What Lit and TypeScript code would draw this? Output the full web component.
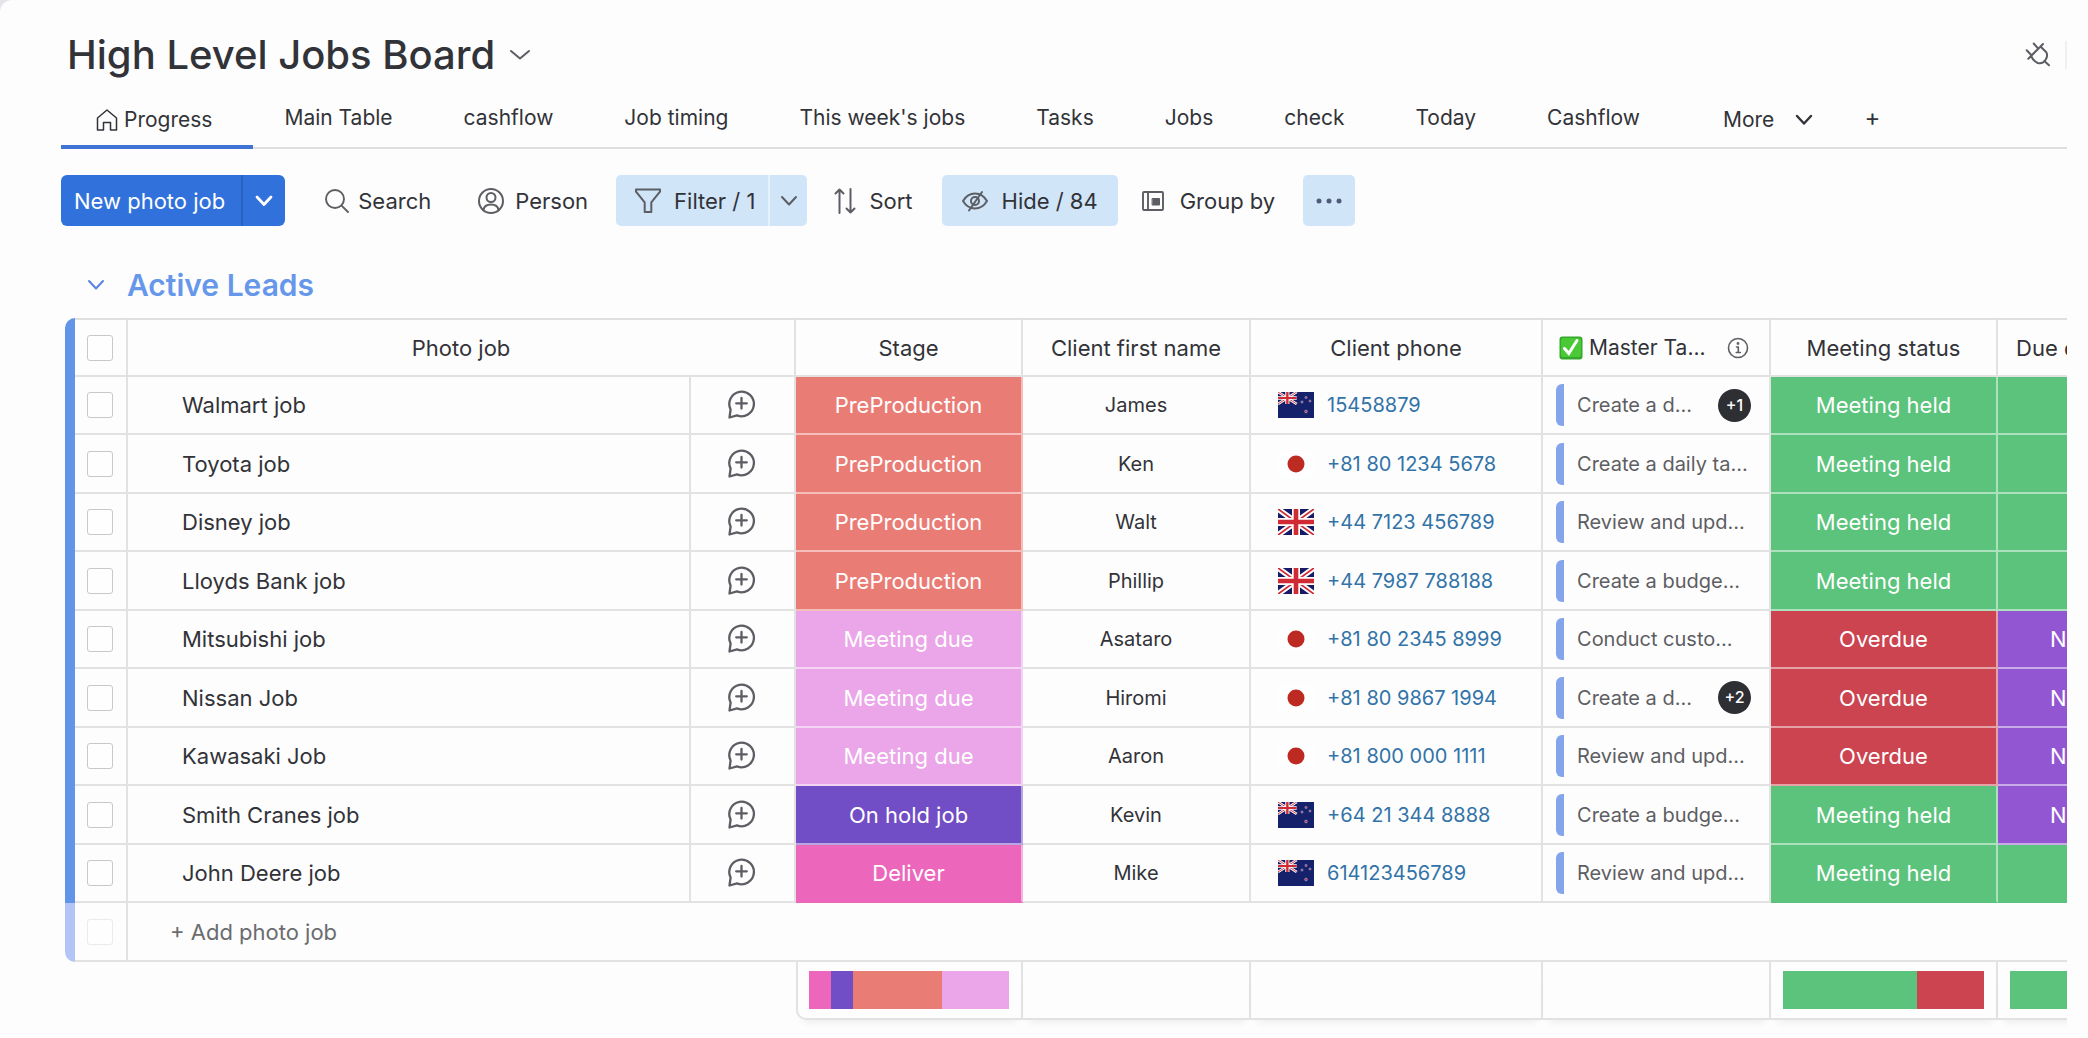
import { LitElement, html, css, svg, nothing } from "lit";
import { customElement } from "lit/decorators.js";
import { classMap } from "lit/directives/class-map.js";
import { styleMap } from "lit/directives/style-map.js";

type Flag = "nz" | "jp" | "gb";

interface Job {
  name: string;
  stage: string;
  client: string;
  flag: Flag;
  phone: string;
  task: string;
  extra?: number;
  meeting: string;
  due: string;
}

const COLORS: Record<string, string> = {
  PreProduction: "#e97d76",
  "Meeting due": "#eaa6e8",
  "On hold job": "#714dc6",
  Deliver: "#ec66bb",
  "Meeting held": "#5bc37c",
  Overdue: "#cb444f",
  N: "#9256d2",
  "": "#5bc37c",
};

const JOBS: Job[] = [
  { name: "Walmart job", stage: "PreProduction", client: "James", flag: "nz", phone: "15458879", task: "Create a d...", extra: 1, meeting: "Meeting held", due: "" },
  { name: "Toyota job", stage: "PreProduction", client: "Ken", flag: "jp", phone: "+81 80 1234 5678", task: "Create a daily ta...", meeting: "Meeting held", due: "" },
  { name: "Disney job", stage: "PreProduction", client: "Walt", flag: "gb", phone: "+44 7123 456789", task: "Review and upd...", meeting: "Meeting held", due: "" },
  { name: "Lloyds Bank job", stage: "PreProduction", client: "Phillip", flag: "gb", phone: "+44 7987 788188", task: "Create a budge...", meeting: "Meeting held", due: "" },
  { name: "Mitsubishi job", stage: "Meeting due", client: "Asataro", flag: "jp", phone: "+81 80 2345 8999", task: "Conduct custo...", meeting: "Overdue", due: "N" },
  { name: "Nissan Job", stage: "Meeting due", client: "Hiromi", flag: "jp", phone: "+81 80 9867 1994", task: "Create a d...", extra: 2, meeting: "Overdue", due: "N" },
  { name: "Kawasaki Job", stage: "Meeting due", client: "Aaron", flag: "jp", phone: "+81 800 000 1111", task: "Review and upd...", meeting: "Overdue", due: "N" },
  { name: "Smith Cranes job", stage: "On hold job", client: "Kevin", flag: "nz", phone: "+64 21 344 8888", task: "Create a budge...", meeting: "Meeting held", due: "N" },
  { name: "John Deere job", stage: "Deliver", client: "Mike", flag: "nz", phone: "614123456789", task: "Review and upd...", meeting: "Meeting held", due: "" },
];

const TABS = ["Main Table", "cashflow", "Job timing", "This week's jobs", "Tasks", "Jobs", "check", "Today", "Cashflow"];

const icon = (w: number, h: number, body: unknown, stroke = 2) => html`<svg class="icon" width=${w} height=${h}
  viewBox="0 0 ${w} ${h}" fill="none" stroke="currentColor" stroke-width=${stroke} stroke-linecap="round"
  stroke-linejoin="round" aria-hidden="true">${body}</svg>`;

const chevron = (w = 18, stroke = 2) => icon(w, 12, svg`<path d="M2 2 L${w / 2} 9.5 L${w - 2} 2"/>`, stroke);

const homeIcon = () => icon(24, 24, svg`<path d="M2.500 10 12 2l9.500 8v12h-6v-7.500h-7V22h-6z"/>`, 1.5);
const searchIcon = () => icon(26, 26, svg`<circle cx="11" cy="11" r="9"/><path d="M17.600 17.600 24 24"/>`, 1.9);
const personIcon = () => icon(28, 28, svg`<circle cx="14" cy="14" r="12"/><circle cx="14" cy="10.500" r="4.500"/><path d="M6.500 23c.6-4 3.500-5.500 7.500-5.500s6.900 1.500 7.500 5.500"/>`, 2);
const filterIcon = () => icon(28, 28, svg`<path d="M2 2.500h24v2.200l-8.700 10.600V25h-6.600v-9.700L2 4.700z"/>`, 2);
const sortIcon = () => icon(24, 28, svg`<path d="M6.500 26V2.500M2.500 6.500l4-4 4 4M17.500 2v23.500M13.500 21.500l4 4 4-4"/>`, 2);
const hideIcon = () => icon(28, 24, svg`<path d="M2 12c3-5 7-7.500 12-7.500S23 7 26 12c-3 5-7 7.500-12 7.500S5 17 2 12z"/><circle cx="14" cy="12" r="4"/><path d="M8 21.500 21 3"/>`, 2);
const groupIcon = () => icon(24, 22, svg`<rect x="2" y="2" width="20" height="18" rx="1"/><path d="M7 2v18"/><path d="M11.500 8.500h7v6.500h-7z" fill="currentColor" stroke-width="1"/>`, 1.9);
const plugIcon = () => icon(26, 26, svg`<path d="M3.300 16.700 18 2M1.700 8.300l5 5.200M8.700 1.500l4.500 5.200M6.200 14c1.500 3.600 4 6 6.500 7 3 .8 6.300-.6 8-3.400 1.500-2.500 1.800-5.200.6-7.300L15.500 4.500M19.300 19l4.700 4.300"/>`, 2);
const chatIcon = () => icon(32, 32, svg`<path d="M2.500 29.500 3.600 21.500A12.300 12.300 0 1 1 10 27.400z"/><path d="M14.500 10v10.500M9.200 15.300h10.600"/>`, 2.3);
const infoIcon = () => icon(22, 22, svg`<circle cx="11" cy="11" r="9.500"/><path d="M9.500 10h1.800v5.500M9.300 15.500h4"/><circle cx="11" cy="6.500" r=".6" fill="currentColor"/>`, 1.6);
const checkEmoji = () => html`<svg class="icon" width="24" height="24" viewBox="0 0 24 24" aria-hidden="true">
  <rect x=".5" y=".5" width="23" height="23" rx="3" fill="#35a82c"/><rect x="2" y="2" width="20" height="19" rx="2" fill="#49c936"/>
  <path d="M5.500 12.500 9.800 17.500 18 4.500" fill="none" stroke="#fff" stroke-width="3" stroke-linecap="round"/></svg>`;

const unionJack = svg`<rect width="36" height="26" fill="#161b66"/>
  <path d="M0 0 36 26M36 0 0 26" stroke="#fff" stroke-width="5.500"/>
  <path d="M0 0 36 26M36 0 0 26" stroke="#d02a35" stroke-width="1.800"/>
  <path d="M18 0v26M0 13h36" stroke="#fff" stroke-width="8"/>
  <path d="M18 0v26M0 13h36" stroke="#d02a35" stroke-width="4.600"/>`;

const FLAGS: Record<Flag, { label: string; body: unknown }> = {
  gb: { label: "United Kingdom", body: unionJack },
  jp: { label: "Japan", body: svg`<rect width="36" height="26" fill="#fefefe"/><circle cx="18" cy="13" r="8.500" fill="#bc2a22"/>` },
  nz: {
    label: "New Zealand",
    body: svg`<rect width="36" height="26" fill="#15226b"/><g transform="scale(.52 .46)">${unionJack}</g>
      <g fill="#c9344f" stroke="#9fb0dd" stroke-width=".6"><circle cx="28" cy="5.500" r="1.100"/><circle cx="24" cy="10" r="1.100"/><circle cx="32" cy="9" r="1"/><circle cx="28" cy="19.500" r="1.400"/></g>`,
  },
};

@customElement("app-root")
export class AppRoot extends LitElement {
  static styles = css`
    :host {
      display: block;
      min-height: 100vh;
      background: #e4e5e8;
      color: #323338;
      font-family: Inter, "Open Sans", sans-serif;
      font-size: 22px;
      line-height: 28px;
    }
    *, *::before, *::after { box-sizing: border-box; }
    .page {
      min-height: 100vh;
      padding: 27px 21px 16px 61px;
      background: #fdfdfd;
      border-top-left-radius: 12px;
      overflow: hidden;
    }
    button {
      display: inline-flex;
      align-items: center;
      border: 0;
      padding: 0;
      background: none;
      color: inherit;
      font: inherit;
      white-space: nowrap;
      cursor: pointer;
    }
    .icon { display: block; flex: none; color: #5c5e64; }

    .top { display: flex; justify-content: space-between; align-items: center; height: 56px; }
    .title { display: flex; align-items: center; gap: 14px; padding-left: 6px; }
    h1 { margin: 0; font-size: 40px; line-height: 56px; font-weight: 500; }
    .plug { padding-right: 14px; border-right: 2px solid #f0f0f0; height: 28px; }

    .tabs { display: flex; align-items: stretch; height: 66px; border-bottom: 2px solid #dfdfdf; font-size: 21px; }
    .tab { padding: 6px 35px 0 36px; }
    .tab.active {
      gap: 5px;
      padding: 12px 41px 0 34px;
      margin: 0 -5px -2px 0;
      border-bottom: 4px solid #3f74d6;
    }
    .tab.more { gap: 21px; padding: 10px 0 0 48px; }
    .tab.add { padding: 6px 0 0 51px; font-size: 24px; }
    .dark .icon { color: #323338; }

    .toolbar { display: flex; align-items: center; height: 51px; margin-top: 26px; }
    .split { display: flex; height: 51px; border-radius: 6px; overflow: hidden; }
    .tool { height: 51px; gap: 12px; }
    .primary { background: #3071dc; color: #fff; margin-right: 39px; }
    .primary .icon { color: #fff; }
    .primary .tool { padding: 0 16px 0 13px; }
    .primary .arrow { width: 44px; justify-content: center; border-left: 2px solid #2a61c4; }
    .soft { background: #d0e5f8; border-radius: 5px; }
    .filter .tool { padding: 0 13px 0 18px; }
    .filter .arrow { width: 39px; justify-content: center; border-left: 2px solid #e6f1fb; }
    .hide { gap: 13px; padding: 0 20px 0 19px; margin: 0 23px 0 29px; }
    .search { gap: 8px; margin-right: 46px; }
    .person { gap: 10px; margin-right: 28px; }
    .filter { margin-right: 26px; }
    .group { gap: 15px; margin-right: 28px; }
    .dots { width: 52px; justify-content: center; }
    .dots .icon { color: #4f5b78; }

    .section { display: flex; align-items: center; gap: 22px; margin-top: 36px; padding-left: 26px; height: 46px; }
    .section .icon { color: #5b83e0; }
    h2 { margin: 0; font-size: 30px; line-height: 46px; font-weight: 600; color: #6797eb; }

    .board { overflow: hidden; padding: 10px 0 20px 4px; }
    table { table-layout: fixed; width: 2159px; border-collapse: separate; border-spacing: 0; }
    .c-strip { width: 10px; }
    .c-check { width: 53px; }
    .c-name { width: 563px; }
    .c-chat { width: 105px; }
    .c-col { width: 227px; }
    .c-mid { width: 228px; }
    .c-phone { width: 292px; }
    th, td {
      height: 58px;
      padding: 0;
      font-weight: 400;
      text-align: center;
      white-space: nowrap;
      border-right: 2px solid #e2e2e2;
      border-bottom: 2px solid #e2e2e2;
    }
    thead th { border-top: 2px solid #dfdfdf; height: 59px; }
    tbody tr:nth-child(even) td { height: 59px; }
    th.strip, td.strip { border: 0; background: #6294e8; }
    thead .strip { border-top-left-radius: 10px; }
    .add .strip { background: #b3c5f7; border-bottom-left-radius: 10px; }
    input[type="checkbox"] {
      appearance: none;
      display: block;
      width: 26px;
      height: 26px;
      margin: 0 auto 0 12px;
      border: 1px solid #c8c8c8;
      border-radius: 3px;
      background: #fefefe;
    }
    .add input[type="checkbox"] { border-color: #ebebeb; }
    .name { text-align: left; padding-left: 54px; }
    .client { font-size: 20px; }
    .chat { padding-bottom: 2px; }
    .chat button { display: flex; margin: 0 auto; }
    .pill { color: #fff; border-color: rgba(255, 255, 255, 0.5); }
    .pill.left { text-align: left; padding-left: 52px; }
    tbody tr:nth-last-child(2) .pill { border-bottom-color: transparent; }
    .phone { display: flex; align-items: center; gap: 13px; padding-left: 27px; font-size: 20px; }
    a { color: #3273a8; text-decoration: none; }
    .task { display: flex; align-items: center; padding: 0 18px 0 13px; color: #5d5e63; font-size: 20px; }
    .task::before { content: ""; width: 8px; height: 42px; margin-right: 13px; flex: none; background: #84a5ec; border-radius: 6px 0 0 6px; }
    .task b {
      flex: none;
      width: 33px;
      height: 33px;
      margin-left: auto;
      border-radius: 50%;
      background: #2e2f33;
      color: #fff;
      font-size: 16px;
      font-weight: 500;
      line-height: 33px;
      text-align: center;
    }
    .master { display: flex; align-items: center; gap: 6px; padding: 0 20px 0 16px; font-size: 21px; }
    .master .icon:last-child { margin-left: auto; }
    .due { text-align: left; padding-left: 18px; }
    .add .wide { border-right: 0; text-align: left; }
    .new { color: #6b6c70; padding-left: 42px; }
    tfoot td { height: 58px; box-shadow: 0 8px 8px -6px rgba(0, 0, 0, 0.07); }
    tfoot .blank { border: 0; box-shadow: none; }
    tfoot .first { border-bottom-left-radius: 10px; border-left: 2px solid #e2e2e2; }
    .battery { display: flex; height: 38px; margin: 0 12px; }
    .first .battery { margin: 0 12px 0 11px; }
  `;

  private battery(field: "stage" | "meeting" | "due", order: string[]) {
    return html`<div class="battery">${order.map((key) => {
      const share = JOBS.filter((job) => job[field] === key).length / JOBS.length;
      return html`<i style=${styleMap({ width: `${share * 100}%`, background: COLORS[key] })}></i>`;
    })}</div>`;
  }

  private pill(value: string, left = false) {
    return html`<td class=${classMap({ pill: true, left })} style=${styleMap({ "background-color": COLORS[value] })}>${value}</td>`;
  }

  private row(job: Job) {
    const flag = FLAGS[job.flag];
    return html`<tr>
      <td class="strip"></td>
      <td><input type="checkbox" aria-label=${`Select ${job.name}`} /></td>
      <td class="name">${job.name}</td>
      <td class="chat"><button aria-label="Start conversation">${chatIcon()}</button></td>
      ${this.pill(job.stage)}
      <td class="client">${job.client}</td>
      <td>
        <div class="phone">
          <svg width="36" height="26" viewBox="0 0 36 26" role="img" aria-label=${flag.label}>${flag.body}</svg>
          <a href=${`tel:${job.phone.replace(/ /g, "")}`}>${job.phone}</a>
        </div>
      </td>
      <td><div class="task">${job.task}${job.extra ? html`<b>+${job.extra}</b>` : nothing}</div></td>
      ${this.pill(job.meeting)}
      ${this.pill(job.due, true)}
    </tr>`;
  }

  render() {
    return html`<div class="page">
      <header class="top">
        <div class="title"><h1>High Level Jobs Board</h1><button aria-label="Board menu">${chevron(22)}</button></div>
        <button class="plug" aria-label="Integrations">${plugIcon()}</button>
      </header>

      <nav class="tabs dark">
        <button class="tab active">${homeIcon()}Progress</button>
        ${TABS.map((tab) => html`<button class="tab">${tab}</button>`)}
        <button class="tab more">More ${chevron(18, 2.4)}</button>
        <button class="tab add" aria-label="Add view">+</button>
      </nav>

      <div class="toolbar">
        <div class="split primary">
          <button class="tool">New photo job</button>
          <button class="arrow" aria-label="More ways to add">${chevron(18, 2.8)}</button>
        </div>
        <button class="tool search">${searchIcon()}Search</button>
        <button class="tool person">${personIcon()}Person</button>
        <div class="split soft filter">
          <button class="tool">${filterIcon()}Filter / 1</button>
          <button class="arrow" aria-label="Filter options">${chevron(18, 2)}</button>
        </div>
        <button class="tool sort">${sortIcon()}Sort</button>
        <button class="tool soft hide">${hideIcon()}Hide / 84</button>
        <button class="tool group">${groupIcon()}Group by</button>
        <button class="tool soft dots" aria-label="More actions">
          <svg class="icon" width="28" height="6" viewBox="0 0 28 6" fill="currentColor" aria-hidden="true">
            <circle cx="4" cy="3" r="2.500"/><circle cx="14" cy="3" r="2.500"/><circle cx="24" cy="3" r="2.500"/>
          </svg>
        </button>
      </div>

      <div class="section"><button aria-label="Collapse group">${chevron(18)}</button><h2>Active Leads</h2></div>

      <div class="board">
        <table>
          <colgroup>
            <col class="c-strip" /><col class="c-check" /><col class="c-name" /><col class="c-chat" /><col class="c-col" /><col class="c-mid" />
            <col class="c-phone" /><col class="c-mid" /><col class="c-col" /><col class="c-mid" />
          </colgroup>
          <thead>
            <tr>
              <th class="strip"></th>
              <th><input type="checkbox" aria-label="Select all" /></th>
              <th colspan="2">Photo job</th>
              <th>Stage</th>
              <th>Client first name</th>
              <th>Client phone</th>
              <th><div class="master">${checkEmoji()}<span>Master Ta...</span>${infoIcon()}</div></th>
              <th>Meeting status</th>
              <th class="due">Due d</th>
            </tr>
          </thead>
          <tbody>
            ${JOBS.map((job) => this.row(job))}
            <tr class="add">
              <td class="strip"></td>
              <td><input type="checkbox" disabled aria-label="Select new job" /></td>
              <td class="wide" colspan="8"><button class="new">+ Add photo job</button></td>
            </tr>
          </tbody>
          <tfoot>
            <tr>
              <td class="blank" colspan="4"></td>
              <td class="first">${this.battery("stage", ["Deliver", "On hold job", "PreProduction", "Meeting due"])}</td>
              <td></td>
              <td></td>
              <td></td>
              <td>${this.battery("meeting", ["Meeting held", "Overdue"])}</td>
              <td>${this.battery("due", ["", "N"])}</td>
            </tr>
          </tfoot>
        </table>
      </div>
    </div>`;
  }
}
